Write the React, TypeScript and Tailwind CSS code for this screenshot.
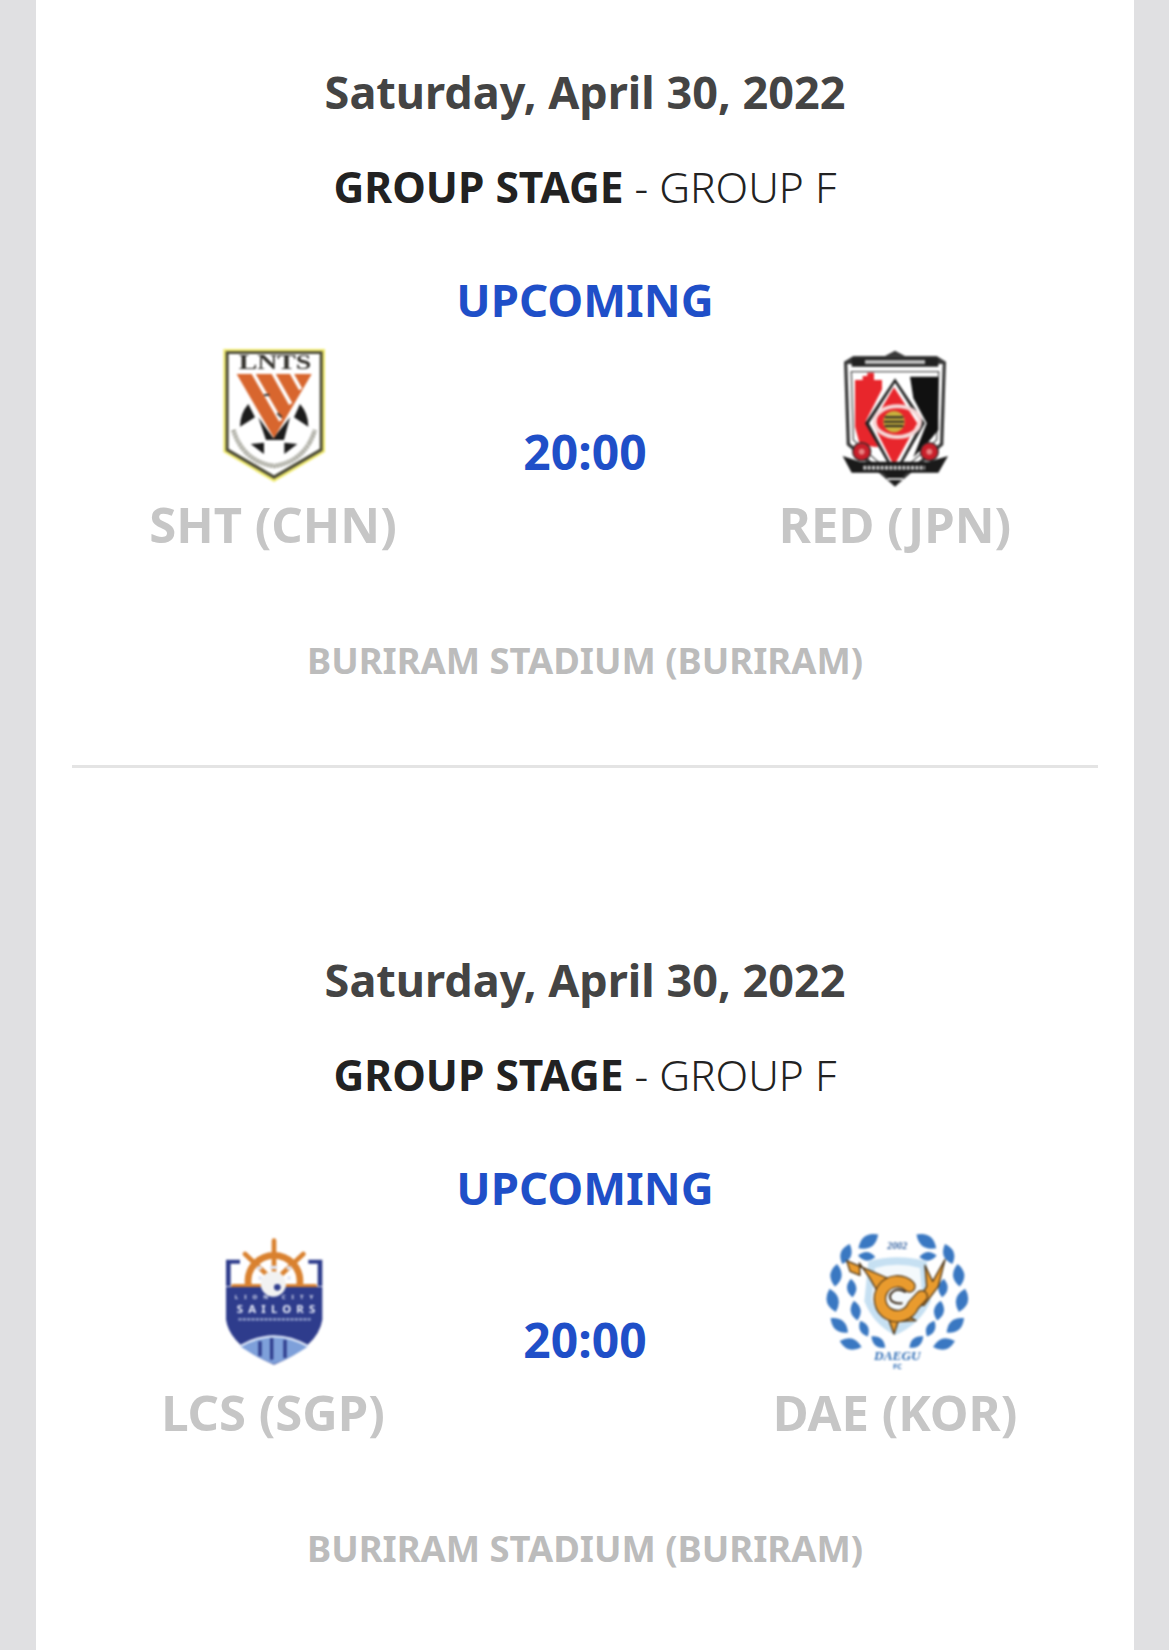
import React from 'react';

const fontStack = { fontFamily: '"Noto Sans", sans-serif' };

const ShanghaiLogo = () => (
  <svg viewBox="0 0 510 510" className="w-[170px] h-[170px] blur-[0.8px]">
    <path d="M100,57 L405,57 L405,366 L252,456 L100,366 Z" fill="#efe96a" />
    <path d="M107,64 L398,64 L398,362 L252,447 L107,362 Z" fill="#4b4a38" />
    <path d="M116,72 L389,72 L389,356 L252,436 L116,356 Z" fill="#ffffff" />
    <text x="255" y="117" textAnchor="middle" fontSize="60" fontWeight="700" textLength="218" lengthAdjust="spacingAndGlyphs" fill="#33312c" fontFamily="Liberation Serif, serif">LNTS</text>
    <path d="M175,222 Q150,250 150,290 L195,262 Z" fill="#1c1c1c" />
    <path d="M330,222 Q355,250 355,290 L312,262 Z" fill="#1c1c1c" />
    <path d="M182,342 L222,338 L222,372 Z" fill="#1c1c1c" />
    <path d="M322,342 L283,338 L283,372 Z" fill="#1c1c1c" />
    <path d="M205,262 L250,325 L300,262 L282,330 L228,330 Z" fill="#1c1c1c" />
    <path d="M130,300 Q160,395 252,408 Q345,395 375,300" fill="none" stroke="#9a9a8e" strokeWidth="14" strokeDasharray="6 3" />
    <path d="M140,132 L365,132 L252,325 Z" fill="#d8662e" />
    <path d="M190,130 L272,272 M250,130 L302,222 M305,130 L332,178" stroke="#fff" strokeWidth="11" fill="none" />
    <path d="M222,195 L238,195 M262,250 L275,262" stroke="#333" strokeWidth="6" />
  </svg>
);

const UrawaLogo = () => (
  <svg viewBox="0 0 510 510" className="w-[170px] h-[170px] blur-[0.8px]">
    <path d="M102,95 L130,78 L225,78 L255,62 L285,78 L380,78 L408,95 L400,345 L255,470 L110,345 Z" fill="#3a3a3a" />
    <path d="M112,102 L398,102 L390,340 L255,455 L120,340 Z" fill="#ffffff" />
    <path d="M124,125 L386,125 L380,330 L255,440 L130,330 Z" fill="#fff" stroke="#555" strokeWidth="4" />
    <path d="M125,84 L385,84 L385,110 L125,110 Z" fill="#222" />
    <path d="M165,90 L345,90 L345,102 L165,102 Z" fill="#bdbdbd" />
    <path d="M135,150 L158,150 L158,138 L172,138 L172,128 L192,128 L192,150 L216,150 L216,178 L168,272 L205,352 L150,345 L135,290 Z" fill="#e8262c" />
    <path d="M300,140 L385,140 L385,300 L350,342 L310,382 L350,280 L310,205 Z" fill="#111111" />
    <path d="M255,145 L345,280 L255,438 L165,280 Z" fill="#222" />
    <path d="M255,158 L333,280 L255,424 L177,280 Z" fill="#fff" />
    <path d="M252,172 L322,280 L252,408 L188,280 Z" fill="#e8262c" />
    <ellipse cx="262" cy="275" rx="68" ry="46" fill="none" stroke="#f6d6d6" strokeWidth="12" />
    <circle cx="252" cy="275" r="32" fill="#c8b13c" />
    <path d="M224,262 L280,262 M222,275 L282,275 M224,288 L280,288" stroke="#222" strokeWidth="6" />
    <path d="M98,378 L150,395 L355,395 L414,378 L385,428 L290,428 L255,468 L220,428 L125,428 Z" fill="#1a1a1a" />
    <path d="M160,413 L345,413" stroke="#cfcfcf" strokeWidth="12" strokeDasharray="9 4" />
    <path d="M232,447 L280,447" stroke="#ddd" strokeWidth="6" />
    <circle cx="155" cy="365" r="29" fill="#2a2a2a" />
    <circle cx="358" cy="365" r="29" fill="#2a2a2a" />
    <circle cx="155" cy="365" r="25" fill="#c81f2a" />
    <circle cx="358" cy="365" r="25" fill="#c81f2a" />
    <circle cx="155" cy="365" r="9" fill="#e88080" />
    <circle cx="358" cy="365" r="9" fill="#e88080" />
  </svg>
);

const SailorsLogo = () => (
  <svg viewBox="0 0 510 510" className="w-[170px] h-[170px] blur-[0.8px]">
    <path d="M108,125 L150,125 L150,137 L122,137 L122,205 L108,205 Z" fill="#2e3c8c" />
    <path d="M397,125 L355,125 L355,137 L383,137 L383,205 L397,205 Z" fill="#2e3c8c" />
    <g stroke="#d9812f" fill="none">
      <circle cx="252" cy="190" r="78" strokeWidth="20" />
      <path d="M252,68 L252,190 M165,108 L252,190 M340,108 L252,190 M130,205 L375,205" strokeWidth="14" strokeLinecap="round" />
    </g>
    <path d="M108,207 L397,207 L397,305 Q385,385 252,440 Q120,385 108,305 Z" fill="#2e3c8c" />
    <path d="M150,385 Q252,325 355,385 Q300,422 252,438 Q205,422 150,385 Z" fill="#7ea0da" />
    <path d="M150,385 Q252,325 355,385" fill="none" stroke="#dfe8f8" strokeWidth="7" />
    <path d="M210,370 L210,415 M245,360 L245,425 M285,365 L285,420" stroke="#2e3c8c" strokeWidth="10" />
    <circle cx="250" cy="198" r="38" fill="#f2f2f2" />
    <circle cx="262" cy="208" r="10" fill="#2e3c8c" />
    <path d="M200,150 L215,150 M240,148 L262,148 M290,150 L305,150 M205,180 L215,180 M292,180 L302,180" stroke="#dfe4f2" strokeWidth="10" />
    <text x="252" y="243" textAnchor="middle" fontSize="18" fontWeight="700" textLength="235" fill="#e8ecf8" style={fontStack}>LION    CITY</text>
    <text x="258" y="285" textAnchor="middle" fontSize="34" fontWeight="700" textLength="235" fill="#e8ecf8" style={fontStack}>SAILORS</text>
    <path d="M145,304 L362,304" stroke="#98a4d0" strokeWidth="7" strokeDasharray="10 3" />
  </svg>
);

// laurel leaves, left side only: the right side is mirrored
const leaves = [
  [175, 70, -35, 36],
  [108, 108, -70, 32],
  [78, 172, -85, 34],
  [68, 247, 75, 36],
  [88, 322, 40, 34],
  [122, 378, 15, 34],
  [125, 210, 85, 28],
  [137, 278, 80, 30],
  [162, 332, 65, 26],
  [205, 372, 40, 27],
  [170, 115, 5, 26],
];

const leafPath = (len: number) => `M${-len},0 Q0,${-len} ${len},0 Q0,${len} ${-len},0 Z`;

const DaeguLogo = () => (
  <svg viewBox="0 0 510 510" className="w-[170px] h-[170px] blur-[0.8px]">
    <path d="M175,130 Q262,105 350,130 L362,250 Q330,320 255,352 Q190,320 163,250 Z" fill="#c6e0f2" />
    <path d="M195,150 Q262,130 330,150 L338,245 Q310,300 255,325 Q205,300 185,245 Z" fill="#f4f9fc" />
    {leaves.map(([x, y, r, len], i) => (
      <React.Fragment key={i}>
        <path d={leafPath(len)} fill="#3a78c2" transform={`translate(${x} ${y}) rotate(${r})`} />
        <path d={leafPath(len)} fill="#3a78c2" transform={`translate(${524 - x} ${y}) rotate(${-r})`} />
      </React.Fragment>
    ))}
    <text x="262" y="94" textAnchor="middle" fontSize="30" fontStyle="italic" fontWeight="700" fill="#2f5f9f" fontFamily="Liberation Serif, serif">2002</text>
    <g stroke="#4a3418" strokeWidth="4" strokeLinejoin="round" fill="#e99b2e">
      <path d="M232,180 L110,128 L120,160 L150,172 L148,135 L178,178 L205,225 Z" />
      <path d="M318,262 L350,205 L345,142 L368,190 L405,125 L385,205 L342,262 Z" />
      <path d="M225,275 L252,348 L265,310 L318,308 L270,280 Z" />
    </g>
    <g fill="none" strokeLinecap="round">
      <path d="M298,205 A52,52 0 1 0 310,262 L335,235" stroke="#4a3418" strokeWidth="38" />
      <path d="M298,205 A52,52 0 1 0 310,262 L335,235" stroke="#e99b2e" strokeWidth="31" />
      <path d="M285,222 Q255,205 240,232 Q238,258 275,256" stroke="#3a2a18" strokeWidth="6" />
    </g>
    <text x="262" y="425" textAnchor="middle" fontSize="40" fontStyle="italic" fontWeight="700" fill="#2f6db5" fontFamily="Liberation Serif, serif">DAEGU</text>
    <text x="262" y="453" textAnchor="middle" fontSize="22" fontWeight="700" fill="#2f6db5" style={fontStack}>FC</text>
  </svg>
);

type MatchProps = {
  home: string;
  away: string;
  homeLogo: React.ReactNode;
  awayLogo: React.ReactNode;
};

const Match = ({ home, away, homeLogo, awayLogo }: MatchProps) => {
  return (
    <section className="h-[888px] flex flex-col items-center pt-[61px]">
      <h2 className="text-[45px] leading-[62px] font-bold text-[#444444]">Saturday, April 30, 2022</h2>
      <p className="mt-[33px] text-[42.5px] leading-[62px] font-light text-[#222222]">
        <span className="font-bold">GROUP STAGE</span> - GROUP F
      </p>
      <p className="mt-[51px] text-[45.5px] leading-[61px] font-bold text-[#1f4fc8]">UPCOMING</p>
      <div className="w-[1026px] grid grid-cols-[402px_1fr_406px]">
        <div className="flex flex-col items-center">
          <div className="ml-[4px]">{homeLogo}</div>
          <span className="text-[49px] leading-[48px] font-bold text-[#c6c6c6]">{home}</span>
        </div>
        <div className="pt-[97px] pl-[4px] text-center text-[48px] leading-[50px] font-bold text-[#1f4fc8]">20:00</div>
        <div className="flex flex-col items-center">
          {awayLogo}
          <span className="text-[49px] leading-[48px] font-bold text-[#c6c6c6]">{away}</span>
        </div>
      </div>
      <p className="mt-[87px] text-[36.4px] leading-[50px] font-bold text-[#bcbcbc]">BURIRAM STADIUM (BURIRAM)</p>
      <div className="mt-[80px] w-[1026px] h-[3px] bg-[#e4e4e4]" />
    </section>
  );
};

export default function App() {
  return (
    <div className="h-[1650px] overflow-hidden bg-[#e0e0e2] pl-[36px] pr-[35px]" style={fontStack}>
      <main className="bg-white h-full">
        <Match home="SHT (CHN)" away="RED (JPN)" homeLogo={<ShanghaiLogo />} awayLogo={<UrawaLogo />} />
        <Match home="LCS (SGP)" away="DAE (KOR)" homeLogo={<SailorsLogo />} awayLogo={<DaeguLogo />} />
      </main>
    </div>
  );
}
